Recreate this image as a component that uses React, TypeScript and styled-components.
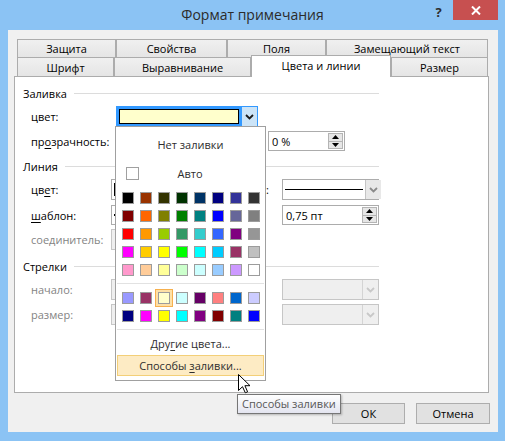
import React from "react";
import styled, { createGlobalStyle } from "styled-components";

const FONT = `"Open Sans", "Noto Sans", "DejaVu Sans", sans-serif`;

const GlobalStyle = createGlobalStyle`
  * { box-sizing: border-box; }
  html, body { margin: 0; padding: 0; background: #8bc3f4; }
  body { font-family: ${FONT}; font-size: 11px; color: #000; }
`;

const Window = styled.div`
  position: relative;
  width: 505px;
  height: 441px;
  background: #8bc3f4;
  display: flex;
  flex-direction: column;
  overflow: hidden;
`;

const TitleBar = styled.div`
  height: 30px;
  flex: none;
  display: grid;
  grid-template-columns: 1fr auto 1fr;
`;

const Title = styled.div`
  grid-column: 2;
  font-size: 14px;
  color: #2b2b2b;
  line-height: 30px;
`;

const Controls = styled.div`
  grid-column: 3;
  justify-self: end;
  display: flex;
  margin-right: 7px;
  height: 20px;
`;

const HelpButton = styled.div`
  width: 29px;
  display: flex;
  align-items: center;
  justify-content: center;
  padding-top: 3px;
  font-weight: 700;
  font-size: 13px;
  color: #2d2d2d;
`;

const CloseButton = styled.div`
  width: 45px;
  background: #c75050;
  display: flex;
  align-items: center;
  justify-content: center;
`;

const Client = styled.div`
  flex: 1;
  margin: 0 7px 9px 8px;
  background: #f0f0f0;
  padding: 9px 8px 0 6px;
  display: flex;
  flex-direction: column;
`;

const TabStrip = styled.div`
  margin-left: 3px;
  display: flex;
  flex-direction: column;
`;

const TabRow = styled.div<{ $h: number }>`
  display: flex;
  height: ${(p) => p.$h}px;
  align-items: flex-start;
`;

const Tab = styled.div<{ $w: number; $active?: boolean; $back?: boolean }>`
  width: ${(p) => p.$w}px;
  flex: none;
  border: 1px solid #acacac;
  border-bottom: none;
  text-align: center;
  white-space: nowrap;
  color: #000;
  background: ${(p) => (p.$active ? "#fff" : "linear-gradient(#f0f0f0, #e5e5e5)")};
  height: ${(p) => (p.$active ? 22 : p.$back ? 18 : 19)}px;
  line-height: ${(p) => (p.$active ? 20 : 17)}px;
  padding-top: ${(p) => (p.$active || p.$back ? 0 : 1)}px;
  margin-top: ${(p) => (p.$active ? -2 : 0)}px;
  position: ${(p) => (p.$active ? "relative" : "static")};
  z-index: ${(p) => (p.$active ? 2 : "auto")};
`;

const Panel = styled.div`
  position: relative;
  z-index: 1;
  width: 475px;
  height: 317px;
  flex: none;
  background: #fff;
  border: 1px solid #acacac;
  padding: 8px 0 0 8px;
  display: flex;
  flex-direction: column;
`;

const GroupHeader = styled.div<{ $mt: number }>`
  margin-top: ${(p) => p.$mt}px;
  width: 356px;
  height: 16px;
  display: flex;
  align-items: center;
  gap: 7px;
  white-space: nowrap;
  &::after {
    content: "";
    flex: 1;
    height: 1px;
    background: #dcdcdc;
  }
`;

const Row = styled.div<{ $mt: number; $h: number }>`
  margin-top: ${(p) => p.$mt}px;
  height: ${(p) => p.$h}px;
  padding-left: 8px;
  display: flex;
  align-items: center;
`;

const Label = styled.div<{ $w: number; $disabled?: boolean }>`
  width: ${(p) => p.$w}px;
  flex: none;
  white-space: nowrap;
  color: ${(p) => (p.$disabled ? "#838383" : "#000")};
`;

const RightLabel = styled.div<{ $w: number; $pr: number }>`
  width: ${(p) => p.$w}px;
  flex: none;
  display: flex;
  justify-content: flex-end;
  padding-right: ${(p) => p.$pr}px;
  white-space: nowrap;
`;

const U = styled.span`
  text-decoration: underline;
  text-underline-offset: 2px;
`;

const ColorCombo = styled.div`
  position: relative;
  width: 142px;
  height: 100%;
  flex: none;
  border: 1px solid #3399ff;
  display: flex;
`;

const ColorField = styled.div`
  flex: 1;
  padding: 2px;
  background: #3399ff;
  display: flex;
`;

const ColorPreview = styled.div<{ $c: string }>`
  flex: 1;
  border: 1px solid #000;
  background: ${(p) => p.$c};
`;

const Combo = styled.div<{ $w: number; $disabled?: boolean }>`
  width: ${(p) => p.$w}px;
  height: 100%;
  flex: none;
  display: flex;
  border: 1px solid ${(p) => (p.$disabled ? "#c6c6c6" : "#acacac")};
  background: ${(p) => (p.$disabled ? "#efefef" : "#fff")};
`;

const ComboField = styled.div`
  flex: 1;
  display: flex;
  align-items: center;
  padding: 0 2px;
`;

const LinePreview = styled.div<{ $w: number; $h: number }>`
  width: ${(p) => p.$w}px;
  height: ${(p) => p.$h}px;
  background: #000;
`;

const ComboButton = styled.div<{ $bg: string; $border: string }>`
  width: 16px;
  flex: none;
  display: flex;
  align-items: center;
  justify-content: center;
  background: ${(p) => p.$bg};
  border-left: 1px solid ${(p) => p.$border};
`;

const Spinner = styled.div<{ $w: number; $ml?: number }>`
  width: ${(p) => p.$w}px;
  margin-left: ${(p) => p.$ml ?? 0}px;
  height: 100%;
  flex: none;
  display: flex;
  border: 1px solid #acacac;
  background: #fff;
`;

const SpinText = styled.div`
  flex: 1;
  display: flex;
  align-items: center;
  padding-left: 3px;
  color: #000;
`;

const SpinButtons = styled.div`
  width: 15px;
  margin: 1px 1px 1px 0;
  display: flex;
  flex-direction: column;
`;

const SpinButton = styled.div`
  flex: 1;
  background: #e6e6e6;
  border: 1px solid #b4b4b4;
  display: flex;
  align-items: center;
  justify-content: center;
  & + & {
    border-top: none;
  }
`;

const Popup = styled.div`
  position: absolute;
  top: 100%;
  left: -2px;
  width: 151px;
  height: 255px;
  z-index: 10;
  background: #fff;
  border: 1px solid #a0a0a0;
  display: flex;
  flex-direction: column;
`;

const MenuText = styled.div<{ $h: number; $pt?: number }>`
  height: ${(p) => p.$h}px;
  padding-top: ${(p) => p.$pt ?? 0}px;
  display: flex;
  align-items: center;
  justify-content: center;
  color: #2e2e2e;
  white-space: nowrap;
`;

const AutoRow = styled.div`
  height: 25px;
  display: flex;
  align-items: center;
  color: #2e2e2e;
`;

const AutoBox = styled.div`
  width: 13px;
  height: 13px;
  margin: 0 0 0 10px;
  border: 1px solid #a0a0a0;
  flex: none;
`;

const AutoText = styled.div`
  flex: 1;
  text-align: center;
  padding-right: 24px;
`;

const SwatchGrid = styled.div<{ $mt: number }>`
  margin: ${(p) => p.$mt}px 0 0 6px;
  display: grid;
  grid-template-columns: repeat(8, 12px);
  grid-auto-rows: 12px;
  gap: 6px;
`;

const Swatch = styled.div<{ $c: string; $sel?: boolean }>`
  width: 12px;
  height: 12px;
  background: ${(p) => p.$c};
  border: 1px solid #9c9c9c;
  box-shadow: ${(p) => (p.$sel ? "0 0 0 2px #fde0a6, 0 0 0 3px #f6b04e" : "none")};
`;

const Separator = styled.div<{ $mt: number }>`
  margin: ${(p) => p.$mt}px 1px 0 1px;
  height: 1px;
  background: #e2e2e2;
  flex: none;
`;

const HotItem = styled.div`
  height: 21px;
  margin: 0 1px;
  background: #fdebc4;
  border: 1px solid #f3cf78;
  display: flex;
  align-items: center;
  justify-content: center;
  color: #2e2e2e;
  white-space: nowrap;
`;

const ButtonRow = styled.div`
  margin-top: 10px;
  display: flex;
  justify-content: flex-end;
  gap: 11px;
`;

const Button = styled.div<{ $w: number }>`
  width: ${(p) => p.$w}px;
  height: 21px;
  border: 1px solid #adadad;
  background: #e1e1e1;
  display: flex;
  align-items: center;
  justify-content: center;
  color: #000;
`;

const Tooltip = styled.div`
  position: absolute;
  left: 237px;
  top: 394px;
  height: 20px;
  padding: 0 4px;
  border: 1px solid #767676;
  background: linear-gradient(#ffffff, #e4e5f0);
  box-shadow: 1px 1px 2px rgba(0, 0, 0, 0.25);
  color: #575757;
  line-height: 18px;
  white-space: nowrap;
  z-index: 20;
`;

const Cursor = styled.svg`
  position: absolute;
  left: 238px;
  top: 374px;
  z-index: 30;
`;

const Chevron = ({ color }: { color: string }) => (
  <svg width="9" height="6" viewBox="0 0 9 6">
    <path d="M1 1 L4.5 4.5 L8 1" fill="none" stroke={color} strokeWidth="1.8" />
  </svg>
);

const Arrow = ({ up }: { up?: boolean }) => (
  <svg width="7" height="4" viewBox="0 0 7 4">
    <path d={up ? "M0 4 L3.5 0 L7 4 Z" : "M0 0 L3.5 4 L7 0 Z"} fill="#000" />
  </svg>
);

const PALETTE = [
  "#000000", "#993300", "#333300", "#003300", "#003366", "#000080", "#333399", "#333333",
  "#800000", "#FF6600", "#808000", "#008000", "#008080", "#0000FF", "#666699", "#808080",
  "#FF0000", "#FF9900", "#99CC00", "#339966", "#33CCCC", "#3366FF", "#800080", "#969696",
  "#FF00FF", "#FFCC00", "#FFFF00", "#00FF00", "#00FFFF", "#00CCFF", "#993366", "#C0C0C0",
  "#FF99CC", "#FFCC99", "#FFFF99", "#CCFFCC", "#CCFFFF", "#99CCFF", "#CC99FF", "#FFFFFF",
];

const RECENT = [
  "#9999FF", "#993366", "#FFFFCC", "#CCFFFF", "#660066", "#FF8080", "#0066CC", "#CCCCFF",
  "#000080", "#FF00FF", "#FFFF00", "#00FFFF", "#800080", "#800000", "#008080", "#0000FF",
];

const DropCombo = ({ w, disabled, children }: { w: number; disabled?: boolean; children?: React.ReactNode }) => (
  <Combo $w={w} $disabled={disabled}>
    <ComboField>{children}</ComboField>
    <ComboButton $bg={disabled ? "#efefef" : "#e8e8e8"} $border={disabled ? "#d4d4d4" : "#c4c4c4"}>
      <Chevron color={disabled ? "#c8c8c8" : "#8a8a8a"} />
    </ComboButton>
  </Combo>
);

const SpinBox = ({ w, ml, value }: { w: number; ml?: number; value: string }) => (
  <Spinner $w={w} $ml={ml}>
    <SpinText>{value}</SpinText>
    <SpinButtons>
      <SpinButton>
        <Arrow up />
      </SpinButton>
      <SpinButton>
        <Arrow />
      </SpinButton>
    </SpinButtons>
  </Spinner>
);

export default function App() {
  return (
    <>
      <GlobalStyle />
      <Window>
        <TitleBar>
          <Title>Формат примечания</Title>
          <Controls>
            <HelpButton>?</HelpButton>
            <CloseButton>
              <svg width="10" height="9" viewBox="0 0 10 9">
                <path d="M1 0.5 L9 8.5 M9 0.5 L1 8.5" stroke="#fff" strokeWidth="2" />
              </svg>
            </CloseButton>
          </Controls>
        </TitleBar>
        <Client>
          <TabStrip>
            <TabRow $h={18}>
              <Tab $back $w={99}>Защита</Tab>
              <Tab $back $w={111}>Свойства</Tab>
              <Tab $back $w={99}>Поля</Tab>
              <Tab $back $w={162}>Замещающий текст</Tab>
            </TabRow>
            <TabRow $h={19}>
              <Tab $w={97}>Шрифт</Tab>
              <Tab $w={137}>Выравнивание</Tab>
              <Tab $active $w={140}>Цвета и линии</Tab>
              <Tab $w={97}>Размер</Tab>
            </TabRow>
          </TabStrip>
          <Panel>
            <GroupHeader $mt={0}>Заливка</GroupHeader>
            <Row $mt={5} $h={21}>
              <Label $w={85}>цвет:</Label>
              <ColorCombo>
                <ColorField>
                  <ColorPreview $c="#ffffcc" />
                </ColorField>
                <ComboButton $bg="#cce4f7" $border="#3399ff">
                  <Chevron color="#1a1a1a" />
                </ComboButton>
                <Popup>
                  <MenuText $h={34}>Нет заливки</MenuText>
                  <AutoRow>
                    <AutoBox />
                    <AutoText>Авто</AutoText>
                  </AutoRow>
                  <SwatchGrid $mt={6}>
                    {PALETTE.map((c, i) => (
                      <Swatch key={i} $c={c} />
                    ))}
                  </SwatchGrid>
                  <Separator $mt={7} />
                  <SwatchGrid $mt={8}>
                    {RECENT.map((c, i) => (
                      <Swatch key={i} $c={c} $sel={i === 2} />
                    ))}
                  </SwatchGrid>
                  <Separator $mt={7} />
                  <MenuText $h={25} $pt={2}>
                    <span>
                      Дру<U>г</U>ие цвета...
                    </span>
                  </MenuText>
                  <HotItem>
                    <span>
                      Способы <U>з</U>аливки...
                    </span>
                  </HotItem>
                </Popup>
              </ColorCombo>
            </Row>
            <Row $mt={4} $h={20}>
              <Label $w={85}>
                пр<U>о</U>зрачность:
              </Label>
              <SpinBox w={77} ml={152} value="0 %" />
            </Row>

            <GroupHeader $mt={7}>Линия</GroupHeader>
            <Row $mt={5} $h={21}>
              <Label $w={80}>
                цв<U>е</U>т:
              </Label>
              <DropCombo w={150}>
                <LinePreview $w={2} $h={13} />
              </DropCombo>
              <RightLabel $w={21} $pr={13}>
                тип:
              </RightLabel>
              <DropCombo w={97}>
                <LinePreview $w={78} $h={1} />
              </DropCombo>
            </Row>
            <Row $mt={5} $h={20}>
              <Label $w={80}>
                <U>ш</U>аблон:
              </Label>
              <DropCombo w={150}>
                <LinePreview $w={2} $h={2} />
              </DropCombo>
              <RightLabel $w={21} $pr={18}>
                толщина:
              </RightLabel>
              <SpinBox w={97} value="0,75 пт" />
            </Row>
            <Row $mt={4} $h={21}>
              <Label $w={80} $disabled>
                соединитель:
              </Label>
              <DropCombo w={150} disabled />
            </Row>

            <GroupHeader $mt={8}>Стрелки</GroupHeader>
            <Row $mt={5} $h={21}>
              <Label $w={80} $disabled>
                начало:
              </Label>
              <DropCombo w={150} disabled />
              <RightLabel $w={21} $pr={0} />
              <DropCombo w={97} disabled />
            </Row>
            <Row $mt={4} $h={21}>
              <Label $w={80} $disabled>
                размер:
              </Label>
              <DropCombo w={150} disabled />
              <RightLabel $w={21} $pr={0} />
              <DropCombo w={97} disabled />
            </Row>
          </Panel>
          <ButtonRow>
            <Button $w={73}>ОК</Button>
            <Button $w={74}>Отмена</Button>
          </ButtonRow>
        </Client>
        <Tooltip>Способы заливки</Tooltip>
        <Cursor width="13" height="20" viewBox="0 0 13 20">
          <path
            d="M0.5 0.5 L0.5 16.5 L4.5 12.7 L7.3 18.8 L9.6 17.8 L6.9 11.7 L12 11.7 Z"
            fill="#fff"
            stroke="#000"
            strokeWidth="1"
            strokeLinejoin="miter"
          />
        </Cursor>
      </Window>
    </>
  );
}
